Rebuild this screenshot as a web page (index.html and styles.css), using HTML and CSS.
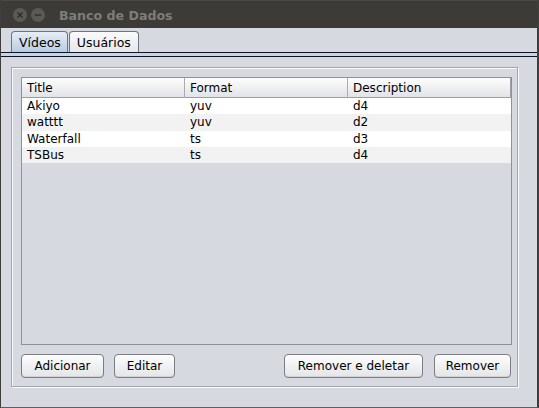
FILE: index.html
```html
<!DOCTYPE html>
<html>
<head>
<meta charset="utf-8">
<link rel="stylesheet" href="styles.css">
</head>
<body>
<div class="window">
  <div class="titlebar">
    <div class="wbtn"><svg width="14" height="14" viewBox="0 0 14 14"><circle cx="7" cy="7" r="7" fill="#5a5955"/><path d="M4.6 4.6 L9.4 9.4 M9.4 4.6 L4.6 9.4" stroke="#2e2d2a" stroke-width="1.4"/></svg></div>
    <div class="wbtn"><svg width="14" height="14" viewBox="0 0 14 14"><circle cx="7" cy="7" r="7" fill="#5a5955"/><path d="M3.8 7 H10.2" stroke="#2e2d2a" stroke-width="1.4"/></svg></div>
    <div class="title">Banco de Dados</div>
  </div>
  <div class="content">
    <div class="tabs">
      <div class="tab selected">Vídeos</div>
      <div class="tab">Usuários</div>
    </div>
    <div class="tabline"></div>
    <div class="panelwrap">
      <div class="panel">
        <div class="scroll">
          <div class="row header">
            <div class="cell">Title</div>
            <div class="cell">Format</div>
            <div class="cell">Description</div>
          </div>
          <div class="row"><div class="cell">Akiyo</div><div class="cell">yuv</div><div class="cell">d4</div></div>
          <div class="row alt"><div class="cell">watttt</div><div class="cell">yuv</div><div class="cell">d2</div></div>
          <div class="row"><div class="cell">Waterfall</div><div class="cell">ts</div><div class="cell">d3</div></div>
          <div class="row alt"><div class="cell">TSBus</div><div class="cell">ts</div><div class="cell">d4</div></div>
        </div>
        <div class="buttons">
          <div class="group">
            <div class="btn b-add">Adicionar</div>
            <div class="btn b-edit">Editar</div>
          </div>
          <div class="group right">
            <div class="btn b-remdel">Remover e deletar</div>
            <div class="btn b-rem">Remover</div>
          </div>
        </div>
      </div>
    </div>
  </div>
</div>
</body>
</html>
```

FILE: styles.css
```css
* { box-sizing: border-box; }
html, body { margin: 0; padding: 0; background: #3c3b37; }
body { font-family: "DejaVu Sans", sans-serif; font-size: 12px; color: #000; }
.window {
  width: 539px; height: 408px;
  border-left: 1px solid #3f3e3a; border-right: 2px solid #3f3e3a; border-bottom: 1px solid #5e5e5e;
  display: flex; flex-direction: column;
  background: #d7d9e0;
}
.titlebar {
  height: 28px; flex: none;
  background: #3c3b37;
  border-top: 1px solid #4a4945;
  display: flex; align-items: center;
  padding-left: 12px;
}
.wbtn { width: 14px; height: 14px; margin-right: 4px; display: flex; }
.wbtn svg { display: block; }
.title {
  margin-left: 10px;
  font-weight: bold; font-size: 12.6px; color: #7e7d78;
  margin-top: 1px;
}
.content { flex: 1; display: flex; flex-direction: column; background: #d7d9e0; }
.tabs { display: flex; padding-left: 10px; padding-top: 3px; height: 24px; }
.tab {
  height: 21px; padding: 0 7px; margin-right: 1px;
  border: 1px solid #6b7480; border-bottom: none;
  border-radius: 4px 4px 0 0;
  background: linear-gradient(#fbfbfc, #e4e7ec);
  display: flex; align-items: center;
  font-size: 12.5px; color: #000;
}
.tab.selected { background: linear-gradient(#e6edf5, #b7cce2); padding: 0 6px 0 7px; }
.tabline {
  height: 5px; flex: none;
  border-top: 1px solid #0f1520; border-bottom: 1px solid #0f1520;
  background: #c3d5e8;
}
.panelwrap { flex: 1; padding: 10px 19px 20px 10px; display: flex; }
.panel {
  flex: 1;
  border: 1px solid #a3a5aa;
  box-shadow: inset 1px 1px 0 #fbfbfc, 1px 1px 0 #fbfbfc;
  padding: 9px 5px 8px 9px;
  display: flex; flex-direction: column;
}
.scroll {
  height: 268px; flex: none;
  border: 1px solid #8f9196;
  background: #d7d9e0;
}
.row { display: flex; height: 16.3px; background: #ffffff; align-items: center; }
.row.alt { background: #f2f2f2; }
.row .cell { width: 163px; padding-left: 5px; white-space: nowrap; }
.row .cell:last-child { flex: 1; }
.row.header {
  height: 20px;
  background: linear-gradient(#fdfdfd, #e2e3e6);
  border-bottom: 1px solid #9c9ea3;
}
.row.header .cell { border-right: 1px solid #a9abb0; height: 20px; display: flex; align-items: center; }
.row.header .cell:last-child { border-right: 1px solid #9c9ea3; }
.buttons { display: flex; justify-content: space-between; margin-top: 9px; }
.group { display: flex; gap: 10px; }
.group.right { gap: 11px; margin-right: 1px; }
.btn {
  height: 24px; display: flex; align-items: center; justify-content: center;
  border: 1px solid #7c7e83; border-radius: 4px;
  background: linear-gradient(#fdfdfd, #e4e5e8);
  box-shadow: inset 0 -1px 0 #cfd1d5;
  font-size: 12px;
}
.b-add { width: 83px; }
.b-edit { width: 61px; }
.b-remdel { width: 139px; }
.b-rem { width: 77px; }
```
